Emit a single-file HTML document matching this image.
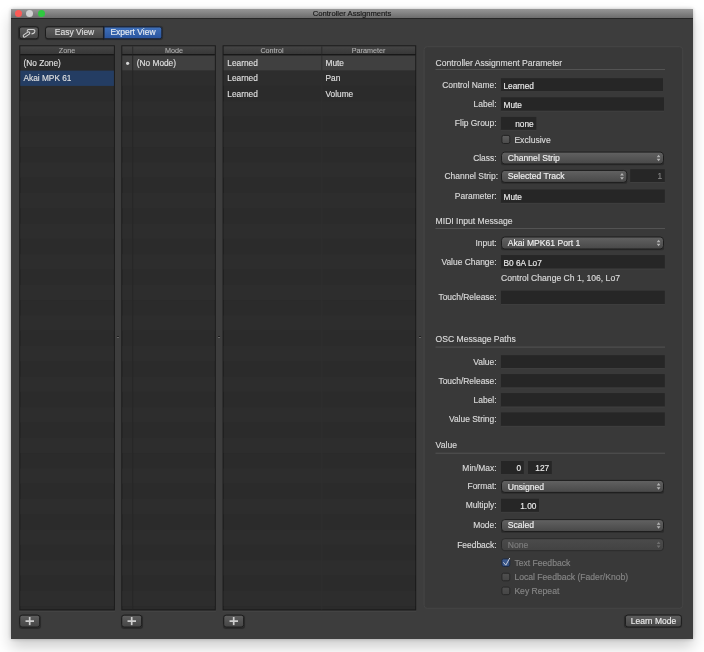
<!DOCTYPE html>
<html><head><meta charset="utf-8"><title>Controller Assignments</title>
<style>
*{box-sizing:border-box;margin:0;padding:0}
html,body{width:704px;height:652px;background:#fff;overflow:hidden}
body{-webkit-text-stroke:0.15px;font-family:"Liberation Sans",sans-serif;font-size:8.6px;color:#e0e0e0;position:relative}
#win{will-change:transform;position:absolute;left:11px;top:9px;width:682px;height:629.5px;background:#3d3d3d;box-shadow:0 8px 14px rgba(0,0,0,.2),0 0 4px rgba(0,0,0,.24)}
#win>*{position:absolute}
#tb{left:0;top:0;width:100%;height:9.5px;background:linear-gradient(#979797,#6c6c6c);border-bottom:1px solid #262626}
#title{left:0;width:100%;top:0;line-height:9px;text-align:center;color:#161616;font-size:7.65px;-webkit-text-stroke:0.15px}
.tl{top:1px;width:7px;height:7px;border-radius:50%}
#shapes{left:0;top:0;width:682px;height:630px}
.t{white-space:nowrap;line-height:10px;height:10px;color:#dadada}
.t.h{font-size:7.2px;color:#b0b0b0;text-align:center;-webkit-text-stroke:0.1px}
.t.r{font-size:8.3px;color:#e2e2e2;-webkit-text-stroke:0.12px}
.t.f{font-size:8.3px;color:#ececec}
.t.ra{text-align:right;font-size:8.45px}
.t.f.ra{font-size:8.3px}
.t.b{font-size:8.5px;color:#ececec;text-align:center}
.btn{border:1px solid #1c1c1c;border-radius:3px;background:linear-gradient(#5e5e5e,#464646);box-shadow:0 0.5px 0.7px rgba(10,10,10,.38)}
</style></head><body>
<div id="win">
<div id="tb"></div>
<div id="title">Controller Assignments</div>
<div class="tl" style="left:3.8px;background:#fc5b57"></div>
<div class="tl" style="left:15.3px;background:#d0d0d0"></div>
<div class="tl" style="left:26.8px;background:#2fc840"></div>

<svg id="shapes" viewBox="11 9 682 630" width="682" height="630"><defs>
<linearGradient id="gh" x1="0" y1="0" x2="0" y2="1"><stop offset="0" stop-color="#454545"/><stop offset="1" stop-color="#373737"/></linearGradient>
<linearGradient id="gs" x1="0" y1="0" x2="0" y2="1"><stop offset="0" stop-color="#626262"/><stop offset="1" stop-color="#484848"/></linearGradient>
<linearGradient id="gd" x1="0" y1="0" x2="0" y2="1"><stop offset="0" stop-color="#4b4b4b"/><stop offset="1" stop-color="#424242"/></linearGradient>
<linearGradient id="gc" x1="0" y1="0" x2="0" y2="1"><stop offset="0" stop-color="#5e5e5e"/><stop offset="1" stop-color="#4a4a4a"/></linearGradient>
<linearGradient id="gcd" x1="0" y1="0" x2="0" y2="1"><stop offset="0" stop-color="#4f4f4f"/><stop offset="1" stop-color="#454545"/></linearGradient>
<linearGradient id="gcb" x1="0" y1="0" x2="0" y2="1"><stop offset="0" stop-color="#3f5d92"/><stop offset="1" stop-color="#324e80"/></linearGradient>
</defs>
<rect x="19.30" y="45.30" width="95.60" height="565.10" fill="#1a1a1a"/>
<rect x="20.30" y="54.80" width="93.60" height="554.60" fill="#2b2b2b"/>
<rect x="20.30" y="70.60" width="93.60" height="15.30" fill="#243d63"/>
<rect x="20.30" y="101.20" width="93.60" height="15.30" fill="#2d2d2d"/>
<rect x="20.30" y="131.80" width="93.60" height="15.30" fill="#2d2d2d"/>
<rect x="20.30" y="162.40" width="93.60" height="15.30" fill="#2d2d2d"/>
<rect x="20.30" y="193.00" width="93.60" height="15.30" fill="#2d2d2d"/>
<rect x="20.30" y="223.60" width="93.60" height="15.30" fill="#2d2d2d"/>
<rect x="20.30" y="254.20" width="93.60" height="15.30" fill="#2d2d2d"/>
<rect x="20.30" y="284.80" width="93.60" height="15.30" fill="#2d2d2d"/>
<rect x="20.30" y="315.40" width="93.60" height="15.30" fill="#2d2d2d"/>
<rect x="20.30" y="346.00" width="93.60" height="15.30" fill="#2d2d2d"/>
<rect x="20.30" y="376.60" width="93.60" height="15.30" fill="#2d2d2d"/>
<rect x="20.30" y="407.20" width="93.60" height="15.30" fill="#2d2d2d"/>
<rect x="20.30" y="437.80" width="93.60" height="15.30" fill="#2d2d2d"/>
<rect x="20.30" y="468.40" width="93.60" height="15.30" fill="#2d2d2d"/>
<rect x="20.30" y="499.00" width="93.60" height="15.30" fill="#2d2d2d"/>
<rect x="20.30" y="529.60" width="93.60" height="15.30" fill="#2d2d2d"/>
<rect x="20.30" y="560.20" width="93.60" height="15.30" fill="#2d2d2d"/>
<rect x="20.30" y="590.80" width="93.60" height="15.30" fill="#2d2d2d"/>
<rect x="20.30" y="46.30" width="93.60" height="8.00" fill="url(#gh)"/>
<rect x="20.30" y="54.30" width="93.60" height="1.00" fill="#151515"/>
<rect x="19.30" y="611.00" width="95.60" height="0.80" fill="#454545"/>
<rect x="121.30" y="45.30" width="94.50" height="565.10" fill="#1a1a1a"/>
<rect x="122.30" y="54.80" width="92.50" height="554.60" fill="#2b2b2b"/>
<rect x="122.30" y="55.30" width="92.50" height="15.30" fill="#404040"/>
<rect x="122.30" y="70.60" width="92.50" height="15.30" fill="#2d2d2d"/>
<rect x="122.30" y="101.20" width="92.50" height="15.30" fill="#2d2d2d"/>
<rect x="122.30" y="131.80" width="92.50" height="15.30" fill="#2d2d2d"/>
<rect x="122.30" y="162.40" width="92.50" height="15.30" fill="#2d2d2d"/>
<rect x="122.30" y="193.00" width="92.50" height="15.30" fill="#2d2d2d"/>
<rect x="122.30" y="223.60" width="92.50" height="15.30" fill="#2d2d2d"/>
<rect x="122.30" y="254.20" width="92.50" height="15.30" fill="#2d2d2d"/>
<rect x="122.30" y="284.80" width="92.50" height="15.30" fill="#2d2d2d"/>
<rect x="122.30" y="315.40" width="92.50" height="15.30" fill="#2d2d2d"/>
<rect x="122.30" y="346.00" width="92.50" height="15.30" fill="#2d2d2d"/>
<rect x="122.30" y="376.60" width="92.50" height="15.30" fill="#2d2d2d"/>
<rect x="122.30" y="407.20" width="92.50" height="15.30" fill="#2d2d2d"/>
<rect x="122.30" y="437.80" width="92.50" height="15.30" fill="#2d2d2d"/>
<rect x="122.30" y="468.40" width="92.50" height="15.30" fill="#2d2d2d"/>
<rect x="122.30" y="499.00" width="92.50" height="15.30" fill="#2d2d2d"/>
<rect x="122.30" y="529.60" width="92.50" height="15.30" fill="#2d2d2d"/>
<rect x="122.30" y="560.20" width="92.50" height="15.30" fill="#2d2d2d"/>
<rect x="122.30" y="590.80" width="92.50" height="15.30" fill="#2d2d2d"/>
<rect x="132.20" y="55.30" width="1.00" height="554.10" fill="#272727"/>
<rect x="122.30" y="46.30" width="92.50" height="8.00" fill="url(#gh)"/>
<rect x="122.30" y="54.30" width="92.50" height="1.00" fill="#151515"/>
<rect x="132.20" y="46.30" width="1.00" height="8.00" fill="#2c2c2c"/>
<rect x="121.30" y="611.00" width="94.50" height="0.80" fill="#454545"/>
<rect x="222.60" y="45.30" width="193.60" height="565.10" fill="#1a1a1a"/>
<rect x="223.60" y="54.80" width="191.60" height="554.60" fill="#2b2b2b"/>
<rect x="223.60" y="55.30" width="191.60" height="15.30" fill="#404040"/>
<rect x="223.60" y="70.60" width="191.60" height="15.30" fill="#2d2d2d"/>
<rect x="223.60" y="101.20" width="191.60" height="15.30" fill="#2d2d2d"/>
<rect x="223.60" y="131.80" width="191.60" height="15.30" fill="#2d2d2d"/>
<rect x="223.60" y="162.40" width="191.60" height="15.30" fill="#2d2d2d"/>
<rect x="223.60" y="193.00" width="191.60" height="15.30" fill="#2d2d2d"/>
<rect x="223.60" y="223.60" width="191.60" height="15.30" fill="#2d2d2d"/>
<rect x="223.60" y="254.20" width="191.60" height="15.30" fill="#2d2d2d"/>
<rect x="223.60" y="284.80" width="191.60" height="15.30" fill="#2d2d2d"/>
<rect x="223.60" y="315.40" width="191.60" height="15.30" fill="#2d2d2d"/>
<rect x="223.60" y="346.00" width="191.60" height="15.30" fill="#2d2d2d"/>
<rect x="223.60" y="376.60" width="191.60" height="15.30" fill="#2d2d2d"/>
<rect x="223.60" y="407.20" width="191.60" height="15.30" fill="#2d2d2d"/>
<rect x="223.60" y="437.80" width="191.60" height="15.30" fill="#2d2d2d"/>
<rect x="223.60" y="468.40" width="191.60" height="15.30" fill="#2d2d2d"/>
<rect x="223.60" y="499.00" width="191.60" height="15.30" fill="#2d2d2d"/>
<rect x="223.60" y="529.60" width="191.60" height="15.30" fill="#2d2d2d"/>
<rect x="223.60" y="560.20" width="191.60" height="15.30" fill="#2d2d2d"/>
<rect x="223.60" y="590.80" width="191.60" height="15.30" fill="#2d2d2d"/>
<rect x="321.30" y="55.30" width="1.00" height="554.10" fill="#303030"/>
<rect x="223.60" y="46.30" width="191.60" height="8.00" fill="url(#gh)"/>
<rect x="223.60" y="54.30" width="191.60" height="1.00" fill="#151515"/>
<rect x="321.30" y="46.30" width="1.00" height="8.00" fill="#2c2c2c"/>
<rect x="222.60" y="611.00" width="193.60" height="0.80" fill="#454545"/>
<circle cx="127.6" cy="63.3" r="1.6" fill="#d6d6d6"/>
<rect x="116.90" y="336.00" width="2.00" height="1.00" fill="#1e1e1e"/>
<rect x="116.90" y="337.00" width="2.00" height="1.00" fill="#686868"/>
<rect x="218.00" y="336.00" width="2.00" height="1.00" fill="#1e1e1e"/>
<rect x="218.00" y="337.00" width="2.00" height="1.00" fill="#686868"/>
<rect x="419.00" y="336.00" width="2.00" height="1.00" fill="#1e1e1e"/>
<rect x="419.00" y="337.00" width="2.00" height="1.00" fill="#686868"/>
<rect x="424.1" y="46.7" width="258.6" height="561.6" rx="3" fill="#393939" stroke="#454545" stroke-width="1"/>
<rect x="435.50" y="69.00" width="229.50" height="1.00" fill="#535353"/>
<rect x="500.90" y="78.20" width="162.10" height="13.20" fill="#262626"/>
<rect x="500.90" y="91.40" width="162.10" height="0.70" fill="#424242"/>
<rect x="500.90" y="97.30" width="163.10" height="13.50" fill="#262626"/>
<rect x="500.90" y="110.80" width="163.10" height="0.70" fill="#424242"/>
<rect x="500.90" y="116.90" width="35.40" height="13.00" fill="#262626"/>
<rect x="500.90" y="129.90" width="35.40" height="0.70" fill="#424242"/>
<rect x="501.90" y="135.40" width="7.90" height="8.10" rx="1.7" fill="url(#gc)" stroke="#232323"/>
<rect x="501.00" y="161.50" width="163.00" height="3.8" rx="2" fill="#2c2c2c"/>
<rect x="501.50" y="152.10" width="162.00" height="11.90" rx="3.3" fill="url(#gs)" stroke="#1d1d1d"/>
<path d="M658.60 154.75l1.9 2.5h-3.8zM658.60 161.35l-1.9 -2.5h3.8z" fill="#b4b4b4"/>
<rect x="501.00" y="179.90" width="126.40" height="3.8" rx="2" fill="#2c2c2c"/>
<rect x="501.50" y="170.40" width="125.40" height="12.00" rx="3.3" fill="url(#gs)" stroke="#1d1d1d"/>
<path d="M622.00 173.10l1.9 2.5h-3.8zM622.00 179.70l-1.9 -2.5h3.8z" fill="#b4b4b4"/>
<rect x="630.20" y="169.20" width="34.60" height="12.80" fill="#262626"/>
<rect x="630.20" y="182.00" width="34.60" height="0.70" fill="#424242"/>
<rect x="500.90" y="189.50" width="163.90" height="13.40" fill="#262626"/>
<rect x="500.90" y="202.90" width="163.90" height="0.70" fill="#424242"/>
<rect x="435.50" y="228.00" width="229.50" height="1.00" fill="#535353"/>
<rect x="501.00" y="246.50" width="163.00" height="3.8" rx="2" fill="#2c2c2c"/>
<rect x="501.50" y="237.00" width="162.00" height="12.00" rx="3.3" fill="url(#gs)" stroke="#1d1d1d"/>
<path d="M658.60 239.70l1.9 2.5h-3.8zM658.60 246.30l-1.9 -2.5h3.8z" fill="#b4b4b4"/>
<rect x="500.90" y="255.10" width="163.90" height="13.60" fill="#262626"/>
<rect x="500.90" y="268.70" width="163.90" height="0.70" fill="#424242"/>
<rect x="500.90" y="290.70" width="163.90" height="13.50" fill="#262626"/>
<rect x="500.90" y="304.20" width="163.90" height="0.70" fill="#424242"/>
<rect x="435.50" y="346.60" width="229.50" height="1.00" fill="#535353"/>
<rect x="500.90" y="355.20" width="163.90" height="13.10" fill="#262626"/>
<rect x="500.90" y="368.30" width="163.90" height="0.70" fill="#424242"/>
<rect x="500.90" y="374.10" width="163.90" height="13.50" fill="#262626"/>
<rect x="500.90" y="387.60" width="163.90" height="0.70" fill="#424242"/>
<rect x="500.90" y="393.10" width="163.90" height="13.60" fill="#262626"/>
<rect x="500.90" y="406.70" width="163.90" height="0.70" fill="#424242"/>
<rect x="500.90" y="412.40" width="163.90" height="13.50" fill="#262626"/>
<rect x="500.90" y="425.90" width="163.90" height="0.70" fill="#424242"/>
<rect x="435.50" y="452.70" width="229.50" height="1.00" fill="#535353"/>
<rect x="501.00" y="461.00" width="22.80" height="13.40" fill="#262626"/>
<rect x="501.00" y="474.40" width="22.80" height="0.70" fill="#424242"/>
<rect x="528.00" y="461.00" width="23.80" height="13.40" fill="#262626"/>
<rect x="528.00" y="474.40" width="23.80" height="0.70" fill="#424242"/>
<rect x="501.00" y="489.90" width="163.00" height="3.8" rx="2" fill="#2c2c2c"/>
<rect x="501.50" y="480.40" width="162.00" height="12.00" rx="3.3" fill="url(#gs)" stroke="#1d1d1d"/>
<path d="M658.60 483.10l1.9 2.5h-3.8zM658.60 489.70l-1.9 -2.5h3.8z" fill="#b4b4b4"/>
<rect x="501.00" y="498.80" width="38.00" height="13.10" fill="#262626"/>
<rect x="501.00" y="511.90" width="38.00" height="0.70" fill="#424242"/>
<rect x="501.00" y="529.00" width="163.00" height="3.8" rx="2" fill="#2c2c2c"/>
<rect x="501.50" y="519.60" width="162.00" height="11.90" rx="3.3" fill="url(#gs)" stroke="#1d1d1d"/>
<path d="M658.60 522.25l1.9 2.5h-3.8zM658.60 528.85l-1.9 -2.5h3.8z" fill="#b4b4b4"/>
<rect x="501.50" y="538.70" width="162.00" height="12.00" rx="3.3" fill="url(#gd)" stroke="#2a2a2a"/>
<path d="M658.60 541.40l1.9 2.5h-3.8zM658.60 548.00l-1.9 -2.5h3.8z" fill="#6e6e6e"/>
<rect x="501.90" y="558.90" width="7.90" height="7.60" rx="1.7" fill="url(#gcb)" stroke="#1f2a40"/>
<path d="M503.40 562.30l2.4 2.9l4 -7.2" fill="none" stroke="#c6cbd6" stroke-width="1.0"/>
<rect x="501.90" y="573.20" width="7.90" height="7.60" rx="1.7" fill="url(#gcd)" stroke="#272727"/>
<rect x="501.90" y="587.10" width="7.90" height="7.60" rx="1.7" fill="url(#gcd)" stroke="#272727"/>
</svg>
<div class="btn" style="left:8px;top:17px;width:20.4px;height:13.4px;transform:translate(-0.1px,0.3px)"><svg width="20.3" height="13" viewBox="0 0 20.3 13" style="position:absolute;left:-1px;top:-1px"><g fill="none" stroke="#d2d2d2" stroke-width="1.05"><rect x="-3.7" y="-1.3" width="7.4" height="2.6" rx="1.3" transform="translate(7.6 8.2) rotate(-35)"/><path d="M8.4 5.4V4.3Q8.4 3.2 9.5 3.2H14.2Q16.3 3.4 15.9 5.4Q15.3 7.6 12.6 7.6"/></g></svg></div>
<div class="btn" style="left:34px;top:17px;width:59px;height:13px;transform:translate(0,0.3px);border-radius:3px 0 0 3px"></div>
<div class="btn" style="left:92px;top:17px;width:59px;height:13px;transform:translate(0.4px,0.3px);border-radius:0 3px 3px 0;background:linear-gradient(#3f70bb,#2a559f);border-color:#16233c"></div>
<div class="btn" style="left:8.3px;top:605px;width:21px;height:13px;transform:translate(0.2px,0.6px)"><svg width="9" height="9" viewBox="0 0 9 9" style="position:absolute;left:5px;top:1px"><path d="M4.5 0.4V8.6M0.2 4.5H8.8" stroke="#cdcdcd" stroke-width="1.7" fill="none"/></svg></div>
<div class="btn" style="left:110.3px;top:605px;width:21px;height:13px;transform:translate(0.2px,0.6px)"><svg width="9" height="9" viewBox="0 0 9 9" style="position:absolute;left:5px;top:1px"><path d="M4.5 0.4V8.6M0.2 4.5H8.8" stroke="#cdcdcd" stroke-width="1.7" fill="none"/></svg></div>
<div class="btn" style="left:211.6px;top:605px;width:21px;height:13px;transform:translate(0.2px,0.6px)"><svg width="9" height="9" viewBox="0 0 9 9" style="position:absolute;left:5px;top:1px"><path d="M4.5 0.4V8.6M0.2 4.5H8.8" stroke="#cdcdcd" stroke-width="1.7" fill="none"/></svg></div>
<div class="btn" style="left:614px;top:605px;width:57px;height:13px;transform:translate(-0.1px,0.5px)"></div>
<div class="t h" style="top:37px;left:8px;width:96px;">Zone</div>
<div class="t r" style="top:49px;left:12.5px;">(No Zone)</div>
<div class="t r" style="top:64px;left:12.5px;">Akai MPK 61</div>
<div class="t h" style="top:37px;left:121px;width:84px;">Mode</div>
<div class="t r" style="top:49px;left:125.8px;">(No Mode)</div>
<div class="t h" style="top:37px;left:212px;width:98px;">Control</div>
<div class="t h" style="top:37px;left:310px;width:95px;">Parameter</div>
<div class="t r" style="top:49px;left:216.3px;">Learned</div>
<div class="t r" style="top:49px;left:314.5px;">Mute</div>
<div class="t r" style="top:64px;left:216.3px;">Learned</div>
<div class="t r" style="top:64px;left:314.5px;">Pan</div>
<div class="t r" style="top:80px;left:216.3px;">Learned</div>
<div class="t r" style="top:80px;left:314.5px;">Volume</div>
<div class="t " style="top:49px;left:424.6px;">Controller Assignment Parameter</div>
<div class="t  ra" style="top:71px;left:365.6px;width:120px;">Control Name:</div>
<div class="t f" style="top:72px;left:492.5px;">Learned</div>
<div class="t  ra" style="top:90px;left:365.6px;width:120px;">Label:</div>
<div class="t f" style="top:91px;left:492.5px;">Mute</div>
<div class="t  ra" style="top:109px;left:365.6px;width:120px;">Flip Group:</div>
<div class="t f ra" style="top:110px;left:402.7px;width:120px;">none</div>
<div class="t " style="top:126px;left:503.4px;">Exclusive</div>
<div class="t  ra" style="top:144px;left:365.6px;width:120px;">Class:</div>
<div class="t " style="top:144px;left:496.8px;color:#f0f0f0;">Channel Strip</div>
<div class="t  ra" style="top:162px;left:367px;width:120px;">Channel Strip:</div>
<div class="t " style="top:162px;left:496.8px;color:#f0f0f0;">Selected Track</div>
<div class="t f ra" style="top:162px;left:531.2px;width:120px;color:#858585;">1</div>
<div class="t  ra" style="top:182px;left:365.6px;width:120px;">Parameter:</div>
<div class="t f" style="top:183px;left:492.5px;">Mute</div>
<div class="t " style="top:207px;left:424.6px;">MIDI Input Message</div>
<div class="t  ra" style="top:229px;left:365.6px;width:120px;">Input:</div>
<div class="t " style="top:229px;left:496.8px;color:#f0f0f0;">Akai MPK61 Port 1</div>
<div class="t  ra" style="top:248px;left:365.6px;width:120px;">Value Change:</div>
<div class="t f" style="top:249px;left:492.5px;">B0 6A Lo7</div>
<div class="t " style="top:264px;left:490px;">Control Change Ch 1, 106, Lo7</div>
<div class="t  ra" style="top:283px;left:365.6px;width:120px;">Touch/Release:</div>
<div class="t " style="top:325px;left:424.6px;">OSC Message Paths</div>
<div class="t  ra" style="top:348px;left:365.6px;width:120px;">Value:</div>
<div class="t  ra" style="top:367px;left:365.6px;width:120px;">Touch/Release:</div>
<div class="t  ra" style="top:386px;left:365.6px;width:120px;">Label:</div>
<div class="t  ra" style="top:405px;left:365.6px;width:120px;">Value String:</div>
<div class="t " style="top:431px;left:424.6px;">Value</div>
<div class="t  ra" style="top:454px;left:365.6px;width:120px;">Min/Max:</div>
<div class="t f ra" style="top:454px;left:390.2px;width:120px;">0</div>
<div class="t f ra" style="top:454px;left:418.2px;width:120px;">127</div>
<div class="t  ra" style="top:472px;left:365.6px;width:120px;">Format:</div>
<div class="t " style="top:473px;left:496.8px;color:#f0f0f0;">Unsigned</div>
<div class="t  ra" style="top:491px;left:365.6px;width:120px;">Multiply:</div>
<div class="t f ra" style="top:492px;left:405.4px;width:120px;">1.00</div>
<div class="t  ra" style="top:511px;left:365.6px;width:120px;">Mode:</div>
<div class="t " style="top:511px;left:496.8px;color:#f0f0f0;">Scaled</div>
<div class="t  ra" style="top:531px;left:365.6px;width:120px;">Feedback:</div>
<div class="t " style="top:531px;left:496.8px;color:#7e7e7e;">None</div>
<div class="t " style="top:549px;left:503.4px;color:#868686;">Text Feedback</div>
<div class="t " style="top:563px;left:503.4px;color:#868686;">Local Feedback (Fader/Knob)</div>
<div class="t " style="top:577px;left:503.4px;color:#868686;">Key Repeat</div>
<div class="t b" style="top:18px;left:34px;width:59px;color:#dedede;">Easy View</div>
<div class="t b" style="top:18px;left:92.5px;width:59px;color:#e8ecf2;">Expert View</div>
<div class="t b" style="top:607px;left:614px;width:57px;">Learn Mode</div>
</div></body></html>
